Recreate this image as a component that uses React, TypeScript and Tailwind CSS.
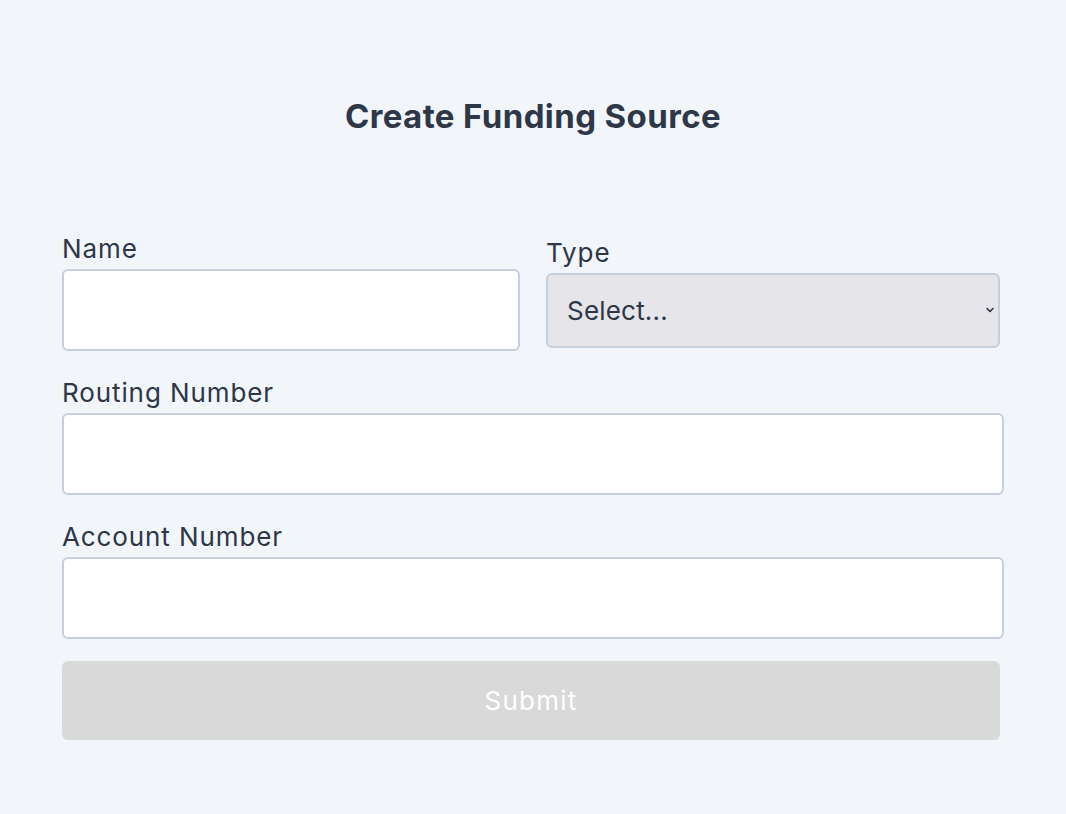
import { useState } from "react";

export default function App() {
  const [type, setType] = useState("");

  return (
    <div className="min-h-screen w-full bg-[#f2f5fa] font-['Inter',sans-serif] text-[#2d3748]">
      <div className="px-[62px] pt-[95px]">
        <h1 className="text-center text-[33px] font-bold leading-[42px] tracking-[0.4px] text-[#2d3748]">Create Funding Source</h1>

        <form className="mt-[97px]" onSubmit={(e) => e.preventDefault()}>
          <div className="flex items-center gap-[26px]">
            <div className="w-[458px]">
              <label className="block text-[26px] leading-[29px] tracking-[0.9px] mb-[6px]">Name</label>
              <input className="block w-full h-[82px] rounded-[6px] border-2 border-[#c5cfdd] bg-white px-4 text-[24px] outline-none" />
            </div>
            <div className="w-[454px]">
              <label className="block text-[26px] leading-[29px] tracking-[0.9px] mb-[6px]">Type</label>
              <div className="relative">
                <select
                  value={type}
                  onChange={(e) => setType(e.target.value)}
                  className="block w-full h-[75px] appearance-none rounded-[6px] border-2 border-[#c5cfdd] bg-[#e5e5ea] pl-[19px] text-[26px] tracking-[0.2px] text-[#2d3748] outline-none"
                >
                  <option value="">Select...</option>
                  <option value="checking">Checking</option>
                  <option value="savings">Savings</option>
                </select>
                <svg className="pointer-events-none absolute right-[5px] top-1/2 -translate-y-1/2" width="10" height="8" viewBox="0 0 10 8" fill="none">
                  <path d="M2 2.5 L5 5.5 L8 2.5" stroke="#2d3748" strokeWidth="1.6" strokeLinecap="round" strokeLinejoin="round" />
                </svg>
              </div>
            </div>
          </div>

          <div className="mt-[27px]">
            <label className="block text-[26px] leading-[29px] tracking-[0.9px] mb-[6px]">Routing Number</label>
            <input className="block w-[942px] h-[82px] rounded-[6px] border-2 border-[#c5cfdd] bg-white px-4 text-[24px] outline-none" />
          </div>

          <div className="mt-[27px]">
            <label className="block text-[26px] leading-[29px] tracking-[0.9px] mb-[6px]">Account Number</label>
            <input className="block w-[942px] h-[82px] rounded-[6px] border-2 border-[#c5cfdd] bg-white px-4 text-[24px] outline-none" />
          </div>

          <button
            type="submit"
            disabled
            className="mt-[22px] block w-[938px] h-[79px] rounded-[6px] bg-[#d9d9d9] text-[26px] tracking-[1.2px] text-white"
          >
            Submit
          </button>
        </form>
      </div>
    </div>
  );
}
